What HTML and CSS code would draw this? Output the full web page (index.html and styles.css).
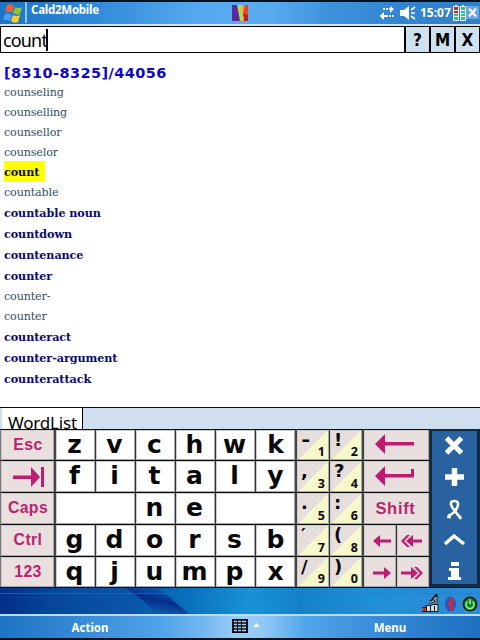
FILE: index.html
```
<!DOCTYPE html>
<html lang="en">
<head>
<meta charset="utf-8">
<title>Cald2Mobile</title>
<link rel="stylesheet" href="styles.css">
</head>
<body>
<div class="screen">
  <header class="titlebar">
    <svg class="flag" width="22" height="22" viewBox="0 0 22 22">
      <path d="M5 2Q9 0 12 3L10 10Q7 8 3 9Z" fill="#e8623a"/><path d="M13 4Q17 6 20 4L18 11Q15 13 11 10Z" fill="#8cc63c"/>
      <path d="M3 11Q6 9 10 12L8 18Q5 16 1 17Z" fill="#4f9bf0"/><path d="M11 12Q14 14 18 12L16 19Q12 21 9 18Z" fill="#fbd02d"/>
    </svg>
    <span class="sep"></span>
    <span class="app">Cald2Mobile</span>
    <svg class="logo" width="16" height="16" viewBox="0 0 16 16"><path fill="#5b2aa0" d="M0 0h16v16H0z"/><path fill="#b6d84a" d="M5 0h7l-1 16H8z"/><path fill="#e8402a" d="M11 0h5v16h-5z"/><path fill="#f2a04a" d="M9 2l4-2-2 8zM11 12l4-4v3l-4 5z"/><path fill="#b81f25" d="M12 8l4 2v6h-4z"/></svg>
    <svg class="tray" width="100" height="22" viewBox="0 0 100 22">
      <g fill="#fff">
        <path d="M3 6h2v2H3zM6 6h2v2H6zM9 6h1V4l4 3-4 4V8H9z"/><path d="M12 13h2v2h-2zM9 13h2v2H9zM8 13H4v-3l-4.500 4 4.500 4v-3h4z"/>
        <path d="M20 8h4l5-4v14l-5-4h-4z"/>
        <path d="M31 8l4-3M31 11h4M31 14l4 3" stroke="#fff" stroke-width="1.600"/>
      </g>
      <path fill="#e8eef5" d="M73 4h6v15h-6zM80 4h6v15h-6zM75 3h2v1h-2zM82 3h2v1h-2z"/>
      <path fill="#d5202c" d="M74 5h4v3h-4zM74 9h4v2h-4z"/>
      <path fill="#30c27c" d="M74 12h4v2h-4zM74 15h4v3h-4zM81 5h4v3h-4zM81 9h4v2h-4zM81 12h4v2h-4zM81 15h4v3h-4z"/>
      <path fill="#69a7e4" d="M86 4h13v13H86z"/><path d="M89 6.500l7 8M96 6.500l-7 8" stroke="#fff" stroke-width="2"/>
    </svg>
    <span class="clock">15:07</span>
  </header>

  <div class="search">
    <div class="field"><span class="query">count</span><span class="caret"></span></div>
    <button>?</button><button>M</button><button>X</button>
  </div>

  <main class="list">
    <h1><span>[8310-8325]/44056</span></h1>
    <p>counseling</p><p>counselling</p><p>counsellor</p><p>counselor</p>
    <p class="b sel"><span>count</span></p>
    <p>countable</p>
    <p class="b">countable noun</p><p class="b">countdown</p><p class="b">countenance</p><p class="b">counter</p>
    <p>counter-</p><p>counter</p>
    <p class="b">counteract</p><p class="b">counter-argument</p><p class="b">counterattack</p>
  </main>

  <div class="tabs"><div class="tab"><span>WordList</span></div></div>

  <div class="keyboard">
    <div class="k f">Esc</div><div class="k">z</div><div class="k">v</div><div class="k">c</div><div class="k">h</div><div class="k">w</div><div class="k e">k</div>
    <div class="k s"><b class="dash">-</b><i>1</i></div><div class="k s e"><b>!</b><i>2</i></div>
    <div class="k a w2"><svg width="66" height="30" viewBox="0 0 66 30"><path d="M11 14l10-10v8h29v3.500H21V24z"/></svg></div>
    <nav class="side"><svg width="46" height="156" viewBox="0 0 46 156">
      <path d="M14.500 7l15 15M29.500 7L14.500 22" stroke-width="5"/><path d="M13 46h19M22.500 37v18" stroke-width="5.500"/>
      <path d="M29 88L20 76Q17 70 22.500 70T25 77Q23 82 16 85M15 86h4M25 83l4 4" stroke-width="2.600"/>
      <path d="M13 113l9-8 10 8" stroke-width="3.500"/>
      <path class="solid" d="M19 131h8v4h-8zM17 137h10v9h2v3H16v-3h3v-6h-2z"/>
    </svg></nav>

    <div class="k f"><svg width="52" height="30" viewBox="0 0 52 30"><path d="M11 14.500h18V6l9 10-9 10v-8H11zM39 6h3v20h-3z"/></svg></div><div class="k">f</div><div class="k">i</div><div class="k">t</div><div class="k">a</div><div class="k">l</div><div class="k e">y</div>
    <div class="k s"><b>,</b><i>3</i></div><div class="k s e"><b>?</b><i>4</i></div>
    <div class="k a w2"><svg width="66" height="30" viewBox="0 0 66 30"><path d="M11 15l10-10v8h26V8h3v8.500H21V25z"/></svg></div>

    <div class="k f">Caps</div><div class="k w2"></div><div class="k">n</div><div class="k">e</div><div class="k w2 e"></div>
    <div class="k s"><b>.</b><i>5</i></div><div class="k s e"><b>:</b><i>6</i></div><div class="k a w2 shift">Shift</div>

    <div class="k f">Ctrl</div><div class="k">g</div><div class="k">d</div><div class="k">o</div><div class="k">r</div><div class="k">s</div><div class="k e">b</div>
    <div class="k s"><b>′</b><i>7</i></div><div class="k s e"><b>(</b><i>8</i></div>
    <div class="k a"><svg width="32" height="30" viewBox="0 0 32 30"><path d="M9 16l7-6v4.500h11v3H16V22z"/></svg></div>
    <div class="k a"><svg width="32" height="30" viewBox="0 0 32 30"><path d="M9 16l7-6v4.500h9v3h-9V22zM4 16l6-6h3l-6 6 6 6h-3z"/></svg></div>

    <div class="k f">123</div><div class="k">q</div><div class="k">j</div><div class="k">u</div><div class="k">m</div><div class="k">p</div><div class="k e">x</div>
    <div class="k s"><b>/</b><i>9</i></div><div class="k s e"><b>)</b><i>0</i></div>
    <div class="k a"><svg width="32" height="30" viewBox="0 0 32 30"><path d="M27 16l-7-6v4.500H9v3h11V22z"/></svg></div>
    <div class="k a"><svg width="32" height="30" viewBox="0 0 32 30"><path d="M21 16l-7-6v4.500H4v3h10V22zM26 16l-6-6h-3l6 6-6 6h3z"/></svg></div>
  </div>

  <div class="today">
    <svg class="wave" width="480" height="26" viewBox="0 0 480 26"><defs><linearGradient id="w" x1="0" y1="1" x2=".6" y2="0"><stop offset=".2" stop-color="#082c8c" stop-opacity="0"/><stop offset=".62" stop-color="#082c8c"/><stop offset="1" stop-color="#0a5fb4"/></linearGradient></defs><path d="M125 0h34l30 26h-34Q145 12 125 0z" fill="url(#w)"/><path d="M0 5.500h480" stroke="#2477c9" opacity=".55"/></svg>
    <svg class="status" width="58" height="20" viewBox="0 0 58 20">
      <path d="M0 17.500v-4h4v-2h5l2-1h5v7z" fill="#ddd" stroke="#111"/><path d="M1 14h3v3H1z" fill="#d22"/><path d="M4.500 12v5M8.500 12v5M12.500 12v5" stroke="#111"/><path d="M7 8h2l5-6v7" stroke="#111" stroke-width="3" fill="none"/><path d="M7 8h3l4-5v6" stroke="#ddd" fill="none"/>
      <ellipse cx="28.500" cy="10" rx="5.500" ry="7.500" fill="#1559d3"/><path d="M25 7l7 6-3.500 3V4l3.500 3-7 6" stroke="#e32636" stroke-width="1.500" fill="none"/>
      <circle cx="48" cy="10" r="7.500" fill="#16231b"/><circle cx="48" cy="10" r="5.800" fill="#1f7a30"/><path d="M45.500 7.500a4 4 0 1 0 5 0M48 5v5" stroke="#7dff76" stroke-width="1.600" fill="none"/>
    </svg>
  </div>

  <footer class="softkeys">
    <span>Action</span>
    <svg width="30" height="16" viewBox="0 0 30 16"><path fill="#080c18" d="M0 0h16v14H0z"/><path d="M2 2.500h3M6 2.500h3M10 2.500h4M2 5.500h3M6 5.500h3M10 5.500h4M2 8.500h3M6 8.500h3M10 8.500h4M2 11.500h3M6 11.500h3M10 11.500h4" stroke="#a9d4f6" stroke-width="1.500"/><path d="M21 8l3.500-4L28 8z" fill="#fff"/></svg>
    <span>Menu</span>
  </footer>
</div>
</body>
</html>
```
FILE: styles.css
```
* { box-sizing: border-box; }
body { margin: 0; background: #fff; }
.screen { position: relative; width: 480px; height: 640px; overflow: hidden; display: flex; flex-direction: column; font-family: "Noto Sans", sans-serif; }

.titlebar { height: 26px; flex: none; display: flex; border-top: 2px solid #04101c; border-bottom: 2px solid #cfe4fa; position: relative;
  background: linear-gradient(90deg, #1d73c4 0, #2f88d8 90px, #56a9ee 200px, #5aacef 270px, #3e92dd 330px, #3385d0 400px, #2f7fca 480px); color: #fff; }
.flag { margin: 1px 0 0 2px; }
.sep { width: 2px; height: 21px; margin: 0 0 0 1px; background: #8cc4f2; }
.app { margin-left: 4px; font: bold 11.5px/15px "Noto Sans", sans-serif; width: 201px; letter-spacing: -.25px; }
.logo { margin-top: 3px; }
.tray { position: absolute; left: 380px; top: 0; }
.clock { position: absolute; left: 420px; top: 3px; font: bold 12px/16px "Noto Sans", sans-serif; letter-spacing: 0; }

.search { height: 27px; flex: none; display: flex; background: #000; padding: 1px 1px 1px 0; gap: 2px; }
.field { flex: 1; border-left: 1px solid #000; background: #fff; display: flex; align-items: center; padding-left: 2px; }
.query { font: 18px/24px "Noto Sans", sans-serif; color: #000; width: 43px; letter-spacing: -.85px; padding-top: 1px; }
.caret { width: 2px; height: 22px; background: #000; }
.search button { border: 0; border-radius: 0; padding: 0; width: 23px; background: #cfe0f1; font: bold 17px/24px "DejaVu Sans Condensed", "DejaVu Sans", sans-serif; color: #000; }

.list { height: 354px; flex: none; padding: 11px 0 0 4px; }
.list h1 { margin: 0; height: 18px; font: bold 14.500px/18px "DejaVu Sans", sans-serif; letter-spacing: .42px; color: #1008c8; }
.list p { margin: 0; height: 20px; font: 11.2px/22px "DejaVu Serif", serif; letter-spacing: -.16px; color: #31535c; white-space: nowrap; }
.list p.b { height: 21px; line-height: 23px; font-weight: bold; letter-spacing: -.08px; color: #0a0a6c; }
.sel span { display: block; width: 41px; height: 21px; margin-top: -1px; background: #ff0; color: #101030; }

.tabs { height: 22px; flex: none; background: #cfdff0; border-top: 1px solid #111; padding-left: 2px; overflow: hidden; }
.tab { width: 81px; height: 22px; margin-top: -1px; background: #fff; border-right: 1px solid #000; font: 17px/32px "Noto Sans", sans-serif; padding-left: 6px; letter-spacing: -.2px; }

.keyboard { height: 159px; flex: none; display: grid; grid-template-columns: 56px 40px 40px 40px 40px 40px 41px 33px 34px 33px 33px 50px; grid-template-rows: 31px 32px 32px 32px 31px; border-bottom: 1px solid #111; }
.k { border-top: 1px solid #080808; border-right: 1px solid #333; box-shadow: inset -1px -1px #aaa, inset 1px 1px #ccc; background: #fff; font: bold 25px/29px "DejaVu Sans", sans-serif; text-align: center; color: #080808; overflow: hidden; padding-right: 2px; position: relative; }
.k.e { border-right: 2px solid #444; padding-right: 0; }
.k.f { background: #e8dfde; color: #b9246f; font: bold 15.800px/30px "Liberation Sans", sans-serif; border-right: 2px solid #444; border-left: 1px solid #777; padding: 0 0 0 1px; letter-spacing: .4px; }
.k.a { background: #e8dfde; padding: 0; }
.k svg { display: block; fill: #bd1c72; }
.w2 { grid-column: span 2; }
.k.shift { color: #b9246f; font: bold 16.500px/31px "Liberation Sans", sans-serif; letter-spacing: .7px; padding-right: 2px; }
.k.s { background: linear-gradient(135deg, #e6dddd 49.500%, #f7f7cc 50.500%); }
.s b { position: absolute; left: 4px; top: -2px; font: bold 18px/23px "DejaVu Sans", sans-serif; }
.s b.dash { transform: scaleX(1.2); left: 5px; }
.s i { position: absolute; right: 4px; bottom: 1px; font: normal bold 12.500px/15px "Noto Sans", sans-serif; }
.side { grid-column: 12; grid-row: 1 / 6; background: #2862a0; border: 2px solid #102b45; border-right-width: 3px; border-bottom-width: 3px; overflow: hidden; }
.side svg { display: block; fill: none; stroke: #fff; }
.side .solid { fill: #fff; stroke: none; }

.today { height: 26px; flex: none; position: relative; background: linear-gradient(90deg, #042f8a 0, #07479b 55px, #0a56a9 130px, #0871bd 190px, #1a92d8 250px, #1282ca 300px, #208fd5 370px, #2c8cd6 480px); }
.wave { position: absolute; left: 0; top: 0; }
.status { position: absolute; left: 422px; top: 6px; }
.softkeys { height: 26px; flex: none; border-top: 2px solid #b9dcf8; border-bottom: 2px solid #071321; display: grid; grid-template-columns: 180px 120px 180px; text-align: center; color: #fff; font: bold 11.5px/23px "Noto Sans", sans-serif;
  background: linear-gradient(90deg, #1c74c4 0, #3487d4 70px, #51a5eb 165px, #74b8f2 205px, #9ccff8 240px, #8fc8f6 265px, #51a5eb 305px, #3487d4 390px, #1c70bf 480px); }
.softkeys svg { margin: 3px 0 0 52px; }
```
